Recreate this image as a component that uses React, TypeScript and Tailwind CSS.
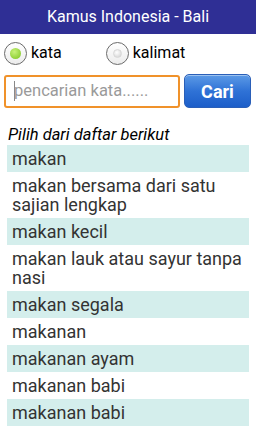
import React from "react";

const items = [
  "makan",
  "makan bersama dari satu sajian lengkap",
  "makan kecil",
  "makan lauk atau sayur tanpa nasi",
  "makan segala",
  "makanan",
  "makanan ayam",
  "makanan babi",
  "makanan babi",
];

function Radio({ checked, label }: { checked: boolean; label: string }) {
  return (
    <div className="flex items-center gap-[4px]">
      <span className="w-[23px] h-[23px] rounded-full border-[1.5px] border-[#6b6b6b] bg-gradient-to-b from-[#ffffff] to-[#ececec] flex items-center justify-center">
        {checked ? (
          <span className="w-[11px] h-[11px] rounded-full bg-[radial-gradient(circle_at_40%_35%,#c8f27a,#7ac31d)]" />
        ) : (
          <span className="w-[9px] h-[9px] rounded-full bg-[radial-gradient(circle_at_40%_35%,#ffffff,#cfcfcf)] border border-[#d8d8d8]" />
        )}
      </span>
      <span className="text-[16px] text-black">{label}</span>
    </div>
  );
}

export default function App() {
  return (
    <div className="w-[256px] h-[427px] overflow-hidden bg-white" style={{ fontFamily: "Roboto, 'Liberation Sans', sans-serif" }}>
      {/* Header */}
      <div className="h-[34px] bg-[#2f2f95] flex items-center justify-center">
        <span className="text-white text-[16px]">Kamus Indonesia - Bali</span>
      </div>

      {/* Mode radios */}
      <div className="flex items-center h-[38px] pl-[4px] gap-[44px]">
        <Radio checked label="kata" />
        <Radio checked={false} label="kalimat" />
      </div>

      {/* Search */}
      <div className="flex items-center px-[4px] gap-[4px] h-[34px] mt-[2px]">
        <div className="w-[176px] h-[33px] border-2 border-[#f0922a] rounded-[3px] flex items-center pl-[8px]">
          <span className="w-px h-[20px] bg-[#888]" />
          <span className="text-[16.5px] text-[#9a9a9a] -ml-[1px]">pencarian kata......</span>
        </div>
        <button className="w-[67px] h-[34px] rounded-[5px] border border-[#2a5fb8] bg-gradient-to-b from-[#5c9ae6] via-[#2f72d6] to-[#1c5ec9] text-white font-bold text-[18px] flex items-center justify-center shadow-[inset_0_1px_0_rgba(255,255,255,0.4)]">
          Cari
        </button>
      </div>

      {/* List */}
      <div className="pt-[17px] px-[7px]">
        <div className="italic text-[16.5px] text-black pl-px leading-[20px]">Pilih dari daftar berikut</div>
        <div className="flex flex-col">
          {items.map((t, i) => (
            <div
              key={i}
              className={`px-[5px] py-[4px] text-[18px] leading-[19px] text-[#333] ${i % 2 === 0 ? "bg-[#d4eeec]" : "bg-white"}`}
            >
              {t}
            </div>
          ))}
        </div>
      </div>
    </div>
  );
}
